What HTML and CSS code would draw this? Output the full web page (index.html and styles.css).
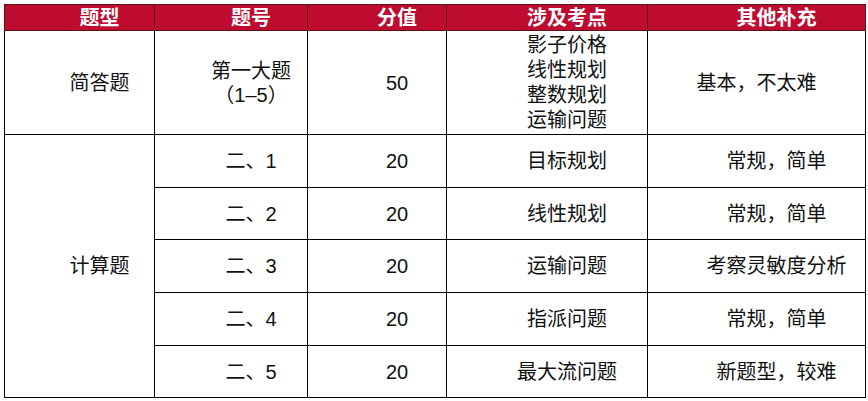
FILE: index.html
```html
<!DOCTYPE html>
<html lang="zh-CN">
<head>
<meta charset="utf-8">
<title>题型</title>
<link rel="stylesheet" href="styles.css">
</head>
<body>
<div class="page">
<table class="exam">
  <colgroup>
    <col class="c1"><col class="c2"><col class="c3"><col class="c4"><col class="c5">
  </colgroup>
  <thead>
    <tr class="head">
      <th>题型</th><th>题号</th><th>分值</th><th>涉及考点</th><th>其他补充</th>
    </tr>
  </thead>
  <tbody>
    <tr class="tall">
      <td>简答题</td>
      <td>第一大题<br>（1–5）</td>
      <td>50</td>
      <td class="list">影子价格<br>线性规划<br>整数规划<br>运输问题</td>
      <td class="nopad">基本，不太难</td>
    </tr>
    <tr class="r53">
      <td rowspan="5">计算题</td>
      <td>二、1</td><td>20</td><td>目标规划</td><td>常规，简单</td>
    </tr>
    <tr class="r52">
      <td>二、2</td><td>20</td><td>线性规划</td><td>常规，简单</td>
    </tr>
    <tr class="r53">
      <td>二、3</td><td>20</td><td>运输问题</td><td>考察灵敏度分析</td>
    </tr>
    <tr class="r53">
      <td>二、4</td><td>20</td><td>指派问题</td><td>常规，简单</td>
    </tr>
    <tr class="r52">
      <td>二、5</td><td>20</td><td>最大流问题</td><td>新题型，较难</td>
    </tr>
  </tbody>
</table>
</div>
</body>
</html>
```
FILE: styles.css
```css
html, body {
  margin: 0;
  padding: 0;
  background: #ffffff;
}
.page {
  padding: 4px 0 0 4px;
}
.exam {
  border-collapse: collapse;
  table-layout: fixed;
  width: 861px;
  font-family: "Liberation Sans", "Noto Sans CJK SC", sans-serif;
  font-size: 20px;
  line-height: 24px;
  color: #111111;
}
.c1 { width: 150px; }
.c2 { width: 153px; }
.c3 { width: 139px; }
.c4 { width: 201px; }
.c5 { width: 218px; }
.exam th, .exam td {
  border: 1px solid #000000;
  text-align: center;
  vertical-align: middle;
  padding: 0 0 0 40px;
}
.exam td.list {
  line-height: 25px;
}
.exam td.nopad {
  padding-left: 0;
}
.head {
  height: 26px;
}
.head th {
  background: #bd0c2f;
  color: #ffffff;
  font-weight: bold;
  border-color: #5a1414;
  line-height: 22px;
  padding-top: 0;
  padding-bottom: 0;
}
.tall { height: 104px; }
.r53 { height: 53px; }
.r52 { height: 52px; }
```
